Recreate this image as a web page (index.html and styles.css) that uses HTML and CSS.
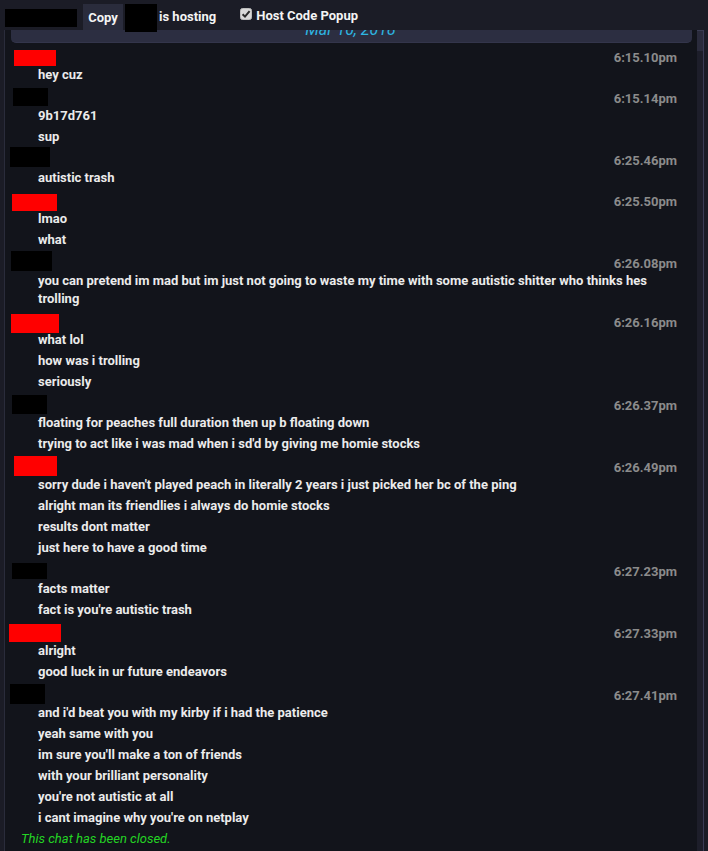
FILE: index.html
```html
<!DOCTYPE html>
<html>
<head>
<meta charset="utf-8">
<link rel="stylesheet" href="styles.css">
</head>
<body>
<div class="topbar">
  <span class="redact r-code"></span>
  <button class="copy">Copy</button>
  <span class="redact r-host"></span>
  <span class="hosting">is hosting</span>
  <span class="check"><svg viewBox="0 0 12 12" width="12" height="12"><rect x="0.5" y="0.5" width="11" height="11" rx="2" fill="#d9d9d9" stroke="#bdbdbd"/><path d="M2.6 6.2 L5 8.6 L9.6 3.2" fill="none" stroke="#2a2a2a" stroke-width="2"/></svg></span>
  <span class="label">Host Code Popup</span>
</div>
<div class="panel">
  <div class="content">
    <div class="datebar"><span class="date">Mar 10, 2018</span></div>
    <div class="list">
      <div class="block">
        <div class="head"><span class="nm red n1"></span><span class="time">6:15.10pm</span></div>
        <div class="line">hey cuz</div>
      </div>
      <div class="block">
        <div class="head"><span class="nm black n2"></span><span class="time">6:15.14pm</span></div>
        <div class="line">9b17d761</div>
        <div class="line">sup</div>
      </div>
      <div class="block">
        <div class="head"><span class="nm black n3"></span><span class="time">6:25.46pm</span></div>
        <div class="line">autistic trash</div>
      </div>
      <div class="block">
        <div class="head"><span class="nm red n4"></span><span class="time">6:25.50pm</span></div>
        <div class="line">lmao</div>
        <div class="line">what</div>
      </div>
      <div class="block">
        <div class="head"><span class="nm black n5"></span><span class="time">6:26.08pm</span></div>
        <div class="line">you can pretend im mad but im just not going to waste my time with some autistic shitter who thinks hes trolling</div>
      </div>
      <div class="block">
        <div class="head"><span class="nm red n6"></span><span class="time">6:26.16pm</span></div>
        <div class="line">what lol</div>
        <div class="line">how was i trolling</div>
        <div class="line">seriously</div>
      </div>
      <div class="block">
        <div class="head"><span class="nm black n7"></span><span class="time">6:26.37pm</span></div>
        <div class="line">floating for peaches full duration then up b floating down</div>
        <div class="line">trying to act like i was mad when i sd'd by giving me homie stocks</div>
      </div>
      <div class="block">
        <div class="head"><span class="nm red n8"></span><span class="time">6:26.49pm</span></div>
        <div class="line">sorry dude i haven't played peach in literally 2 years i just picked her bc of the ping</div>
        <div class="line">alright man its friendlies i always do homie stocks</div>
        <div class="line">results dont matter</div>
        <div class="line">just here to have a good time</div>
      </div>
      <div class="block">
        <div class="head"><span class="nm black n9"></span><span class="time">6:27.23pm</span></div>
        <div class="line">facts matter</div>
        <div class="line">fact is you're autistic trash</div>
      </div>
      <div class="block">
        <div class="head"><span class="nm red n10"></span><span class="time">6:27.33pm</span></div>
        <div class="line">alright</div>
        <div class="line">good luck in ur future endeavors</div>
      </div>
      <div class="block">
        <div class="head"><span class="nm black n11"></span><span class="time">6:27.41pm</span></div>
        <div class="line">and i'd beat you with my kirby if i had the patience</div>
        <div class="line">yeah same with you</div>
        <div class="line">im sure you'll make a ton of friends</div>
        <div class="line">with your brilliant personality</div>
        <div class="line">you're not autistic at all</div>
        <div class="line">i cant imagine why you're on netplay</div>
      </div>
      <div class="closed">This chat has been closed.</div>
    </div>
  </div>
  <div class="scrollbar"><div class="thumb"></div></div>
</div>
</body>
</html>
```
FILE: styles.css
```css
html, body {
  margin: 0;
  padding: 0;
  background: #1b1c26;
  height: 100%;
  overflow: hidden;
  font-family: Roboto, "Liberation Sans", sans-serif;
}

.topbar {
  height: 30px;
  display: flex;
  align-items: center;
  color: #f4f4f4;
  font-weight: 700;
  font-size: 13px;
}

.redact {
  background: #000;
  display: block;
  flex: none;
}

.r-code {
  margin-left: 5px;
  width: 72px;
  height: 18px;
  align-self: flex-start;
  margin-top: 9px;
}

.copy {
  margin-left: 6px;
  width: 40px;
  height: 26px;
  align-self: flex-end;
  border: 0;
  padding: 0;
  background: #2a2c3c;
  color: #f4f4f4;
  font-family: inherit;
  font-weight: 700;
  font-size: 13px;
}

.r-host {
  margin-left: 2px;
  width: 32px;
  height: 28px;
  align-self: flex-start;
  margin-top: 4px;
  position: relative;
  z-index: 2;
}

.hosting {
  margin-left: 2px;
  padding-top: 2px;
}

.check {
  margin-left: 24px;
  width: 12px;
  height: 12px;
  display: block;
  align-self: flex-start;
  margin-top: 8px;
}

.check svg {
  display: block;
}

.label {
  margin-left: 4px;
  padding-top: 1px;
}

.panel {
  display: flex;
  margin-left: 4px;
  width: 700px;
  height: calc(100vh - 30px);
  border-left: 1px solid #2a2c3b;
  box-sizing: border-box;
}

.content {
  flex: 1;
  background: #12141b;
  overflow: hidden;
  min-width: 0;
}

.scrollbar {
  width: 7px;
  flex: none;
  background: #1d1e2a;
  border-right: 1px solid #3a3b55;
  box-sizing: border-box;
  display: flex;
  flex-direction: column;
}

.thumb {
  height: 20px;
  background: #2a2b3c;
  border-top: 1px solid #3a3c52;
}

.datebar {
  margin: 0 5px 0 6px;
  height: 13px;
  background: #2c2e41;
  border-radius: 0 0 5px 5px;
  border-bottom: 1px solid #33354b;
  box-sizing: border-box;
  overflow: hidden;
  text-align: center;
}

.date {
  display: block;
  margin-top: -8px;
  line-height: 16px;
  font-size: 16px;
  font-style: italic;
  color: #2eb6e2;
  padding-right: 2px;
}

.list {
  padding-top: 3px;
  padding-right: 20px;
}

.block {
  margin-top: 4px;
}

.head {
  height: 16px;
  display: flex;
  align-items: center;
}

.nm {
  display: block;
  flex: none;
}

.red { background: #ff0000; }
.black { background: #000; }

.n1 { margin-left: 9px; width: 42px; height: 16px; }
.n2 { margin-left: 8px; width: 35px; height: 18px; margin-bottom: 4px; }
.n3 { margin-left: 5px; width: 40px; height: 20px; margin-bottom: 8px; }
.n4 { margin-left: 7px; width: 45px; height: 17px; }
.n5 { margin-left: 6px; width: 41px; height: 20px; margin-bottom: 6px; }
.n6 { margin-left: 6px; width: 48px; height: 19px; }
.n7 { margin-left: 7px; width: 35px; height: 19px; margin-bottom: 3px; }
.n8 { margin-left: 9px; width: 43px; height: 20px; margin-bottom: 4px; }
.n9 { margin-left: 7px; width: 35px; height: 16px; margin-bottom: 2px; }
.n10 { margin-left: 4px; width: 52px; height: 18px; margin-bottom: 2px; }
.n11 { margin-left: 5px; width: 35px; height: 20px; margin-bottom: 4px; }

.time {
  margin-left: auto;
  font-size: 13px;
  font-weight: 700;
  color: #8b8b8b;
  line-height: 16px;
}

.line {
  padding-left: 33px;
  padding-bottom: 3px;
  font-size: 13px;
  font-weight: 700;
  line-height: 18px;
  color: #ebebeb;
}

.closed {
  padding-left: 16px;
  font-size: 13px;
  font-style: italic;
  line-height: 18px;
  color: #24d424;
}
```
